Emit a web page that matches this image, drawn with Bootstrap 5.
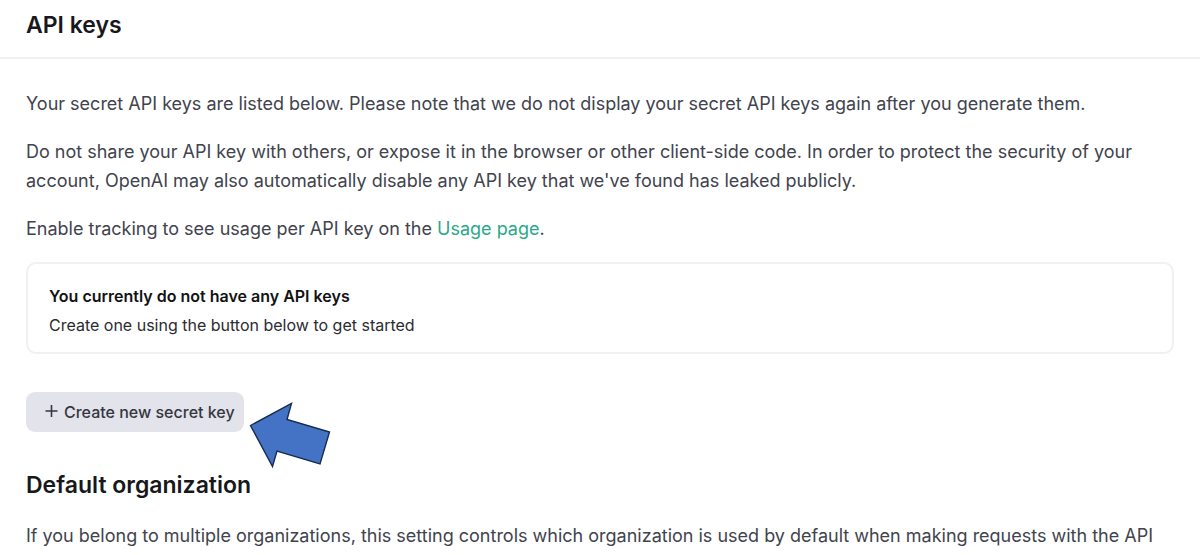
<!DOCTYPE html>
<html lang="en">
<head>
<meta charset="utf-8">
<meta name="viewport" content="width=device-width, initial-scale=1">
<title>API keys</title>
<link href="https://cdn.jsdelivr.net/npm/bootstrap@5.3.0/dist/css/bootstrap.min.css" rel="stylesheet">
<style>
  body { font-family: Inter, "Liberation Sans", sans-serif; font-size: 18px; line-height: 29px; color: #41434d; }
  .page-x { padding-left: 26px; padding-right: 26px; }
  .page-head { padding-top: 10px; padding-bottom: 16px; border-bottom: 2px solid #f0f0f3; }
  .page-title { font-size: 23px; line-height: 31px; font-weight: 600; color: #18181c; margin: 0; }
  .page-body { padding-top: 30px; }
  .page-body p { margin-bottom: 19px; }
  .usage-link { color: #2aa889; text-decoration: none; }
  .empty-box { border: 2px solid #f0f0f5; border-radius: 10px; padding: 18px 21px 12px; font-size: 16px; color: #2b2c31; }
  .empty-title { font-weight: 600; color: #121214; }
  .create-btn { --bs-btn-bg: #e3e3eb; --bs-btn-color: #353740; --bs-btn-hover-bg: #d9d9e3; --bs-btn-border-color: transparent;
    --bs-btn-font-size: 16px; --bs-btn-font-weight: 500; --bs-btn-line-height: 24px; --bs-btn-border-radius: 9px;
    --bs-btn-padding-y: 7px; gap: 6px; padding-left: 17px; padding-right: 8px; }
  .create-row { margin-top: 38px; margin-bottom: 38px; }
  .pointer { left: 100%; top: 10px; margin-left: 5px; }
</style>
</head>
<body>
<header class="page-head page-x">
  <h1 class="page-title">API keys</h1>
</header>
<main class="page-body page-x">
  <p>Your secret API keys are listed below. Please note that we do not display your secret API keys again after you generate them.</p>
  <p>Do not share your API key with others, or expose it in the browser or other client-side code. In order to protect the security of your account, OpenAI may also automatically disable any API key that we've found has leaked publicly.</p>
  <p>Enable tracking to see usage per API key on the <a class="usage-link" href="#usage">Usage page</a>.</p>
  <section class="empty-box">
    <div class="empty-title">You currently do not have any API keys</div>
    <div>Create one using the button below to get started</div>
  </section>
  <div class="create-row d-flex">
    <div class="position-relative">
      <button type="button" class="btn create-btn d-flex align-items-center">
        <svg width="14" height="14" viewBox="0 0 14 14" fill="none" stroke="currentColor" stroke-width="1.6" aria-hidden="true"><path d="M7.500 0v12M1.500 6h12"/></svg>
        Create new secret key
      </button>
      <svg class="pointer position-absolute" width="82" height="66" viewBox="0 0 82 66" aria-hidden="true"><path d="M1.500 23.500 42.500 1.500 38 17.500 80.500 30 71 62 28 49 23.500 64.500Z" fill="#4472c4" stroke="#172c51" stroke-width="1.4"/></svg>
    </div>
  </div>
  <h2 class="page-title">Default organization</h2>
  <p class="mt-3 pt-1 mb-0">If you belong to multiple organizations, this setting controls which organization is used by default when making requests with the API</p>
</main>
<script src="https://cdn.jsdelivr.net/npm/bootstrap@5.3.0/dist/js/bootstrap.bundle.min.js"></script>
</body>
</html>
